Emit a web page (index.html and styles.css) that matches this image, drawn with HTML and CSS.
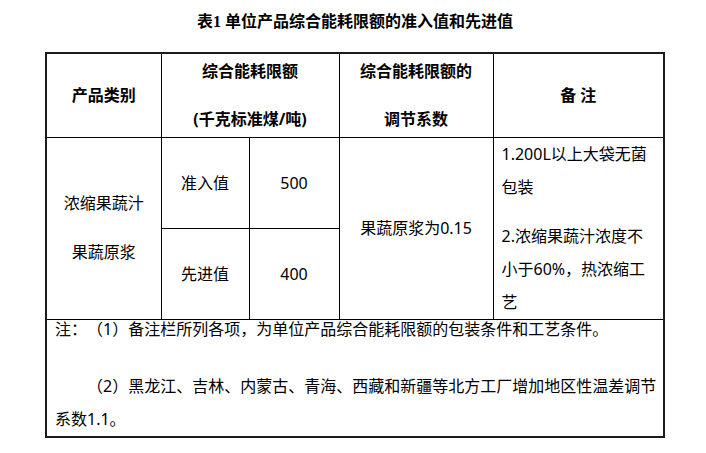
FILE: index.html
```html
<!DOCTYPE html>
<html lang="zh-CN">
<head>
<meta charset="utf-8">
<title>表1 单位产品综合能耗限额的准入值和先进值</title>
<link rel="stylesheet" href="styles.css">
</head>
<body>
<div class="page">
  <h1 class="title">表1 单位产品综合能耗限额的准入值和先进值</h1>
  <table class="spec">
    <colgroup>
      <col class="c1"><col class="c2"><col class="c3"><col class="c4"><col class="c5">
    </colgroup>
    <tr class="head">
      <th>产品类别</th>
      <th colspan="2"><div class="stack head-stack"><p>综合能耗限额</p><p>(千克标准煤/吨)</p></div></th>
      <th><div class="stack head-stack"><p>综合能耗限额的</p><p>调节系数</p></div></th>
      <th>备 注</th>
    </tr>
    <tr class="sub">
      <td rowspan="2"><div class="stack"><p>浓缩果蔬汁</p><p>果蔬原浆</p></div></td>
      <td>准入值</td>
      <td>500</td>
      <td rowspan="2">果蔬原浆为0.15</td>
      <td rowspan="2" class="remark"><div class="stack"><p>1.200L以上大袋无菌<br>包装</p><p>2.浓缩果蔬汁浓度不<br>小于60%，热浓缩工<br>艺</p></div></td>
    </tr>
    <tr class="sub">
      <td>先进值</td>
      <td>400</td>
    </tr>
    <tr class="notes">
      <td colspan="5">
        <p class="note1">注：（1）备注栏所列各项，为单位产品综合能耗限额的包装条件和工艺条件。</p>
        <p class="note2">（2）黑龙江、吉林、内蒙古、青海、西藏和新疆等北方工厂增加地区性温差调节<br>系数1.1。</p>
      </td>
    </tr>
  </table>
</div>
</body>
</html>
```

FILE: styles.css
```css
html, body {
  margin: 0;
  background: #ffffff;
  color: #000000;
}

body {
  font-family: "Noto Sans", "Noto Sans CJK SC", sans-serif;
  text-spacing-trim: space-all;
}

.page {
  width: 620px;
  padding: 10px 0 0 45px;
}

.title {
  margin: 0 0 18px;
  font-family: "Liberation Serif", "Noto Sans CJK SC", serif;
  font-weight: bold;
  font-size: 16px;
  line-height: 24px;
  text-align: center;
}

.spec {
  width: 619px;
  border-collapse: collapse;
  table-layout: fixed;
  border: 2px solid #1c1c1c;
  font-size: 16px;
}

.c1 { width: 115px; }
.c2 { width: 88px; }
.c3 { width: 90px; }
.c4 { width: 154px; }
.c5 { width: 171px; }

.spec th,
.spec td {
  border: 1px solid #000;
  padding: 0 8px;
  text-align: center;
  vertical-align: middle;
  line-height: 24px;
}

.spec th {
  font-weight: bold;
}

.head { height: 84px; }
.sub { height: 91px; }
.notes { height: 116px; }

.stack {
  display: flex;
  flex-direction: column;
  gap: 16px;
}

.stack p {
  margin: 0;
  line-height: 33px;
  white-space: nowrap;
}

.head-stack p {
  line-height: 32px;
}

.spec td.remark {
  text-align: left;
}

.spec .notes td {
  text-align: left;
  vertical-align: top;
}

.note1 {
  margin: 0 0 32px;
  line-height: 18px;
  white-space: nowrap;
}

.note2 {
  margin: 0;
  line-height: 33px;
  text-indent: 2em;
  white-space: nowrap;
}
```
